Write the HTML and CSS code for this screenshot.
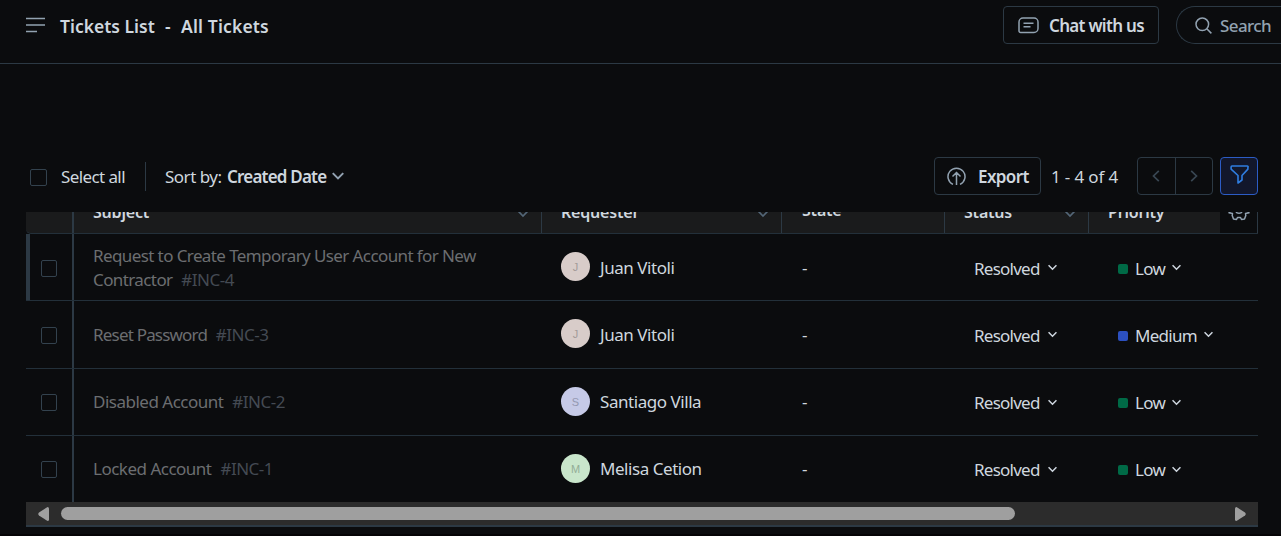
FILE: index.html
```
<!DOCTYPE html>
<html lang="en">
<head>
<meta charset="utf-8">
<title>Tickets List</title>
<link rel="stylesheet" href="styles.css">
</head>
<body>
<svg width="0" height="0" class="defs">
  <symbol id="chev" viewBox="0 0 12 8"><path d="M1.500 1.500 6 6l4.500-4.500" fill="none" stroke="currentColor" stroke-width="1.700"/></symbol>
</svg>
<header class="topbar">
  <svg class="menu" width="19" height="16" viewBox="0 0 19 16"><path d="M0 1.500h19M0 8h19M0 14.500h11" stroke="currentColor" stroke-width="1.600"/></svg>
  <h1 class="title"><span class="t-list">Tickets List</span><span class="t-dash">-</span><span class="t-all">All Tickets</span></h1>
  <button class="btn chat">
    <svg width="21" height="17" viewBox="0 0 21 17" fill="none" stroke="currentColor" stroke-width="1.500"><path d="M5 1h11a4 4 0 0 1 4 4v6.500a4 4 0 0 1-4 4H2.500A1.500 1.500 0 0 1 1 14V5a4 4 0 0 1 4-4zM5.500 6.300h10M5.500 9.700h7"/></svg>
    <span>Chat with us</span>
  </button>
  <div class="search">
    <svg width="17" height="17" viewBox="0 0 17 17" fill="none" stroke="currentColor" stroke-width="1.500"><circle cx="7.300" cy="7.300" r="6.300"/><path d="m11.800 11.800 4.600 4.600"/></svg>
    <span>Search</span>
  </div>
</header>
<section class="toolbar">
  <span class="box"></span>
  <span class="select-all">Select all</span>
  <span class="divider"></span>
  <span class="sort">Sort by:</span>
  <b class="sort-value">Created Date</b>
  <svg class="sort-chev" width="14" height="10"><use href="#chev"/></svg>
  <button class="btn export">
    <svg width="19" height="19" viewBox="0 0 19 19" fill="none" stroke="currentColor" stroke-width="1.500"><path d="M6 17.400a8.500 8.500 0 1 1 7 0M9.500 18V6M5.500 9.500l4-4 4 4"/></svg>
    <span>Export</span>
  </button>
  <span class="range">1 - 4 of 4</span>
  <div class="pager">
    <span><svg width="8" height="12" viewBox="0 0 8 12"><path d="M6.800.800 1.500 6l5.300 5.200" fill="none" stroke="currentColor" stroke-width="1.700"/></svg></span>
    <span><svg width="8" height="12" viewBox="0 0 8 12"><path d="M1.200.800 6.500 6l-5.300 5.200" fill="none" stroke="currentColor" stroke-width="1.700"/></svg></span>
  </div>
  <button class="filter"><svg width="19" height="19" viewBox="0 0 19 19" fill="none" stroke="currentColor" stroke-width="1.600" stroke-linejoin="round"><path d="M2 1h15a1 1 0 0 1 .9 1.600v1.500L12 10.500v4.500l-4 3v-7.500L1.100 4.100V2A1 1 0 0 1 2 1z"/></svg></button>
</section>
<main class="table">
  <div class="row head">
    <div class="c-check"></div>
    <div class="c-subject"><span>Subject</span><svg width="12" height="8"><use href="#chev"/></svg></div>
    <div class="c-requester"><span>Requester</span><svg width="12" height="8"><use href="#chev"/></svg></div>
    <div class="c-state"><span>State</span></div>
    <div class="c-status"><span>Status</span><svg width="12" height="8"><use href="#chev"/></svg></div>
    <div class="c-priority"><span>Priority</span></div>
    <div class="c-gear"><svg width="22" height="22" viewBox="0 0 22 22" fill="none" stroke="currentColor" stroke-width="1.500" stroke-linejoin="round"><path d="M11 3.500 13.500 1 17 2.500V6L20.500 6.500 21.500 9.500 19 11 21 12.700 17.500 13.500 17.800 15.500 16.500 19 13.500 19.500 12.500 17.500H9.500L8.500 19.500 5.500 19 4.200 15.500 4.500 13.500 1 12.700 3 11 .8 9.500 1.500 6.500 5 6V2.500L8.500 1z"/><circle cx="11" cy="10" r="3.300"/></svg></div>
  </div>
  <div class="row current">
    <div class="c-check"><span class="box"></span></div>
    <div class="c-subject"><p><span class="long">Request to Create Temporary User Account for New</span><br>Contractor <i>#INC-4</i></p></div>
    <div class="c-requester"><span class="avatar rose">J</span><span>Juan Vitoli</span></div>
    <div class="c-state">-</div>
    <div class="c-status"><span>Resolved</span><svg width="11" height="7"><use href="#chev"/></svg></div>
    <div class="c-priority"><span class="dot low"></span><span>Low</span><svg width="11" height="7"><use href="#chev"/></svg></div>
  </div>
  <div class="row tall">
    <div class="c-check"><span class="box"></span></div>
    <div class="c-subject"><p class="tight">Reset Password <i>#INC-3</i></p></div>
    <div class="c-requester"><span class="avatar rose">J</span><span>Juan Vitoli</span></div>
    <div class="c-state">-</div>
    <div class="c-status"><span>Resolved</span><svg width="11" height="7"><use href="#chev"/></svg></div>
    <div class="c-priority"><span class="dot medium"></span><span>Medium</span><svg width="11" height="7"><use href="#chev"/></svg></div>
  </div>
  <div class="row">
    <div class="c-check"><span class="box"></span></div>
    <div class="c-subject"><p class="loose">Disabled Account <i>#INC-2</i></p></div>
    <div class="c-requester"><span class="avatar lilac">S</span><span>Santiago Villa</span></div>
    <div class="c-state">-</div>
    <div class="c-status"><span>Resolved</span><svg width="11" height="7"><use href="#chev"/></svg></div>
    <div class="c-priority"><span class="dot low"></span><span>Low</span><svg width="11" height="7"><use href="#chev"/></svg></div>
  </div>
  <div class="row last">
    <div class="c-check"><span class="box"></span></div>
    <div class="c-subject"><p class="loose">Locked Account <i>#INC-1</i></p></div>
    <div class="c-requester"><span class="avatar mint">M</span><span>Melisa Cetion</span></div>
    <div class="c-state">-</div>
    <div class="c-status"><span>Resolved</span><svg width="11" height="7"><use href="#chev"/></svg></div>
    <div class="c-priority"><span class="dot low"></span><span>Low</span><svg width="11" height="7"><use href="#chev"/></svg></div>
  </div>
  <div class="scrollbar">
    <svg width="11" height="14" viewBox="0 0 11 14"><path d="M9.500 0Q11 0 11 1.500v11Q11 14 9.500 14L1 8.500Q-.5 7 1 5.500z" fill="currentColor"/></svg>
    <span class="thumb"></span>
    <svg class="right" width="11" height="14" viewBox="0 0 11 14"><path d="M1.500 0Q0 0 0 1.500v11Q0 14 1.500 14L10 8.500q1.500-1.500 0-3z" fill="currentColor"/></svg>
  </div>
</main>
</body>
</html>
```
FILE: styles.css
```
* { box-sizing: border-box; }
body {
  margin: 0;
  height: 536px;
  overflow: hidden;
  background: #0b0c0e;
  border-bottom: 2px solid #050406;
  color: #cfd7df;
  font: 17px/24px "Noto Sans", sans-serif;
  letter-spacing: -0.6px;
  white-space: nowrap;
}
.defs { position: absolute; }
svg { display: block; flex: none; }
button { font: inherit; letter-spacing: inherit; padding: 0; margin: 0; }

.topbar {
  display: flex;
  height: 64px;
  padding: 6px 0 19px 26px;
  border-bottom: 1px solid #2c3944;
}
.menu { margin-top: 11px; color: #92a2b1; }
.title {
  display: flex;
  margin: 0 auto 0 15px;
  padding-top: 8px;
  font-size: 17.500px;
  font-weight: 600;
  letter-spacing: 0;
}
.t-list { width: 105px; }
.t-dash { width: 16px; }
.t-all { letter-spacing: 0.15px; }
.btn {
  display: flex;
  align-items: center;
  height: 38px;
  border: 1px solid #2c3944;
  border-radius: 4px;
  background: transparent;
  color: #cfd7df;
  font-weight: 600;
}
.btn span, .search span { padding-top: 2px; }
.btn svg { color: #92a2b1; }
.chat { width: 156px; padding-left: 14px; gap: 10px; letter-spacing: -0.7px; }
.search {
  display: flex;
  align-items: center;
  width: 105px;
  height: 38px;
  margin-left: 17px;
  padding-left: 18px;
  gap: 8px;
  border: 1px solid #2c3944;
  border-right: 0;
  border-radius: 19px 0 0 19px;
  color: #92a2b1;
  font-weight: 500;
}

.toolbar {
  display: flex;
  align-items: center;
  height: 148px;
  padding: 76px 23px 0 30px;
}
.box { width: 17px; height: 17px; border: 1px solid #33424e; border-radius: 2px; }
.toolbar .box { margin-top: 2px; }
.select-all, .sort, .sort-value, .range { padding-top: 2px; }
.select-all { width: 98px; padding-left: 14px; }
.divider { width: 1px; height: 29px; background: #2c3944; }
.sort { width: 62px; margin-left: 19px; letter-spacing: -0.5px; }
.sort-value { width: 104px; font-weight: 600; letter-spacing: -0.8px; }
.sort-chev { color: #92a2b1; }
.export { width: 107px; margin-left: auto; padding-left: 12px; gap: 12px; }
.range { width: 96px; padding-left: 10px; letter-spacing: -0.15px; }
.pager {
  display: flex;
  width: 76px;
  height: 38px;
  border: 1px solid #2c3944;
  border-radius: 4px;
  color: #394753;
}
.pager span { display: flex; flex: 1; align-items: center; justify-content: center; }
.pager span + span { border-left: 1px solid #2c3944; }
.filter {
  display: flex;
  justify-content: center;
  width: 38px;
  height: 38px;
  margin-left: 7px;
  padding-top: 7px;
  border: 1px solid #2c5cc5;
  border-radius: 4px;
  background: #12172b;
  color: #2f7de0;
}

.table { width: 1232px; margin-left: 26px; }
.row {
  display: grid;
  grid-template-columns: 48px 468px 240px 163px 144px 131px 38px;
  height: 67px;
  border-bottom: 1px solid #23303a;
}
.row > div { display: flex; align-items: center; }
.tall { height: 68px; }
.last { height: 66px; border-bottom: 0; }
.row .c-check { padding: 1px 0 0 15px; border-right: 2px solid #2c3944; }
.c-check .box { width: 16px; }
.current .c-check { padding: 2px 0 0 11px; border-left: 4px solid #2c3944; }
.c-subject { padding-left: 19px; color: #6c6e71; }
.c-subject p { margin: 0; }
.current p { padding-top: 2px; }
.tight { letter-spacing: -0.8px; }
.loose { letter-spacing: -0.5px; }
.c-subject i { margin-left: 5px; color: #444a53; font-style: normal; letter-spacing: -0.5px; }
.c-requester { padding-left: 19px; gap: 10px; letter-spacing: -0.45px; }
.current .c-requester, .current .c-state { padding-top: 1px; }
.c-state { padding-left: 20px; }
.c-status { padding: 2px 0 0 29px; gap: 7px; letter-spacing: -0.75px; }
.c-priority { padding: 2px 0 0 29px; letter-spacing: -0.7px; }
.current .c-status, .current .c-priority { padding-top: 3px; }
.c-status svg, .c-priority svg { margin-top: -2px; }
.c-priority svg { margin-left: 6px; }
.avatar {
  width: 29px;
  height: 29px;
  margin-top: -2px;
  border-radius: 50%;
  color: #a39b99;
  font: 11px/30px "Liberation Sans", sans-serif;
  text-align: center;
  letter-spacing: 0;
}
.rose { background: #d8ccc9; }
.lilac { background: #c6cae7; color: #9498b1; }
.mint { background: #c9e6cb; color: #93ad97; }
.dot { width: 10px; height: 10px; margin-right: 7px; border-radius: 2px; }
.low { background: #006a46; }
.medium { background: #2c50bf; }

.head {
  height: 22px;
  overflow: hidden;
  background: #1a1b1c;
  border-radius: 0 0 0 5px;
  font-size: 16px;
  font-weight: 600;
}
.row.head > div {
  align-items: flex-start;
  height: 21px;
  padding-top: 0;
  padding-bottom: 0;
  border-right: 1px solid #2c3944;
  letter-spacing: -0.2px;
}
.row.head > .c-check { border-right-width: 2px; }
.row.head > .c-priority { padding-left: 19px; border-right: 0; }
.row.head > .c-status { padding-left: 19px; }
.head .c-subject { color: #cfd7df; }
.head span { margin-top: -12px; }
.head .c-state span { margin-top: -14px; }
.row.head svg { margin: -2px 12px 0 auto; color: #536677; }
.row.head .c-gear { justify-content: center; background: #0b0c0e; }
.row.head .c-gear svg { margin: -12px 0 0; color: #92a2b1; }

.scrollbar {
  display: flex;
  align-items: center;
  height: 25px;
  padding: 0 12px;
  background: #2c2c2c;
  border-bottom: 2px solid #2c3944;
  color: #9f9f9f;
}
.thumb { width: 954px; height: 13px; margin-left: 12px; border-radius: 7px; background: #9f9f9f; }
.scrollbar .right { margin-left: auto; }
```
